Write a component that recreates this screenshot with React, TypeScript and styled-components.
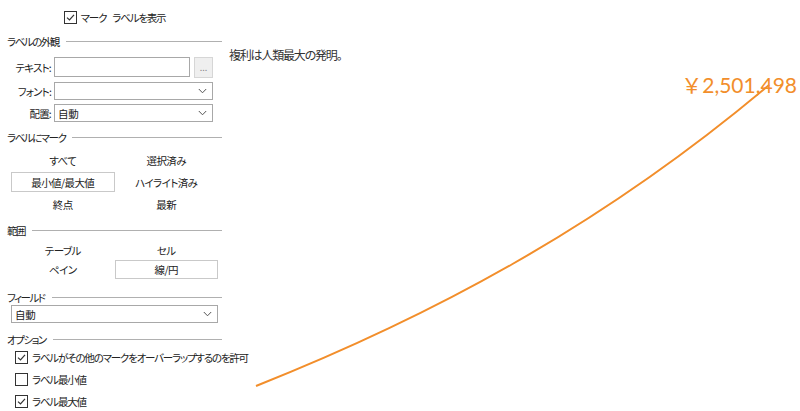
import React from 'react'
import styled, { createGlobalStyle } from 'styled-components'

const GlobalStyle = createGlobalStyle`
  html, body {
    margin: 0;
    padding: 0;
    background: #ffffff;
  }
  body {
    font-family: 'Noto Sans CJK JP', 'Noto Sans', sans-serif;
    font-feature-settings: 'palt';
    color: #222222;
  }
`

const Colors = {
  text: '#222222',
  line: '#b0b0b0',
  border: '#c9c9c9',
  fieldBorder: '#a8a8a8',
  orange: '#f28e2b',
}

const Page = styled.div`
  display: flex;
  width: 800px;
  height: 411px;
  overflow: hidden;
`

const Panel = styled.div`
  width: 215px;
  padding-left: 7px;
  display: flex;
  flex-direction: column;
  font-size: 10.5px;
  letter-spacing: -1.2px;
  color: ${Colors.text};
`

const CenterRow = styled.label`
  margin-top: 8px;
  height: 18px;
  display: flex;
  align-items: center;
  justify-content: center;
  gap: 4px;
  word-spacing: 5px;
`

const Box = styled.span`
  width: 11px;
  height: 11px;
  border: 1px solid #333333;
  background: #ffffff;
  display: flex;
  align-items: center;
  justify-content: center;
  flex-shrink: 0;
`

const Section = styled.div<{ $top: number; $h?: number }>`
  margin-top: ${(p) => p.$top}px;
  height: ${(p) => p.$h ?? 18}px;
  display: flex;
  align-items: center;
  gap: 7px;
  letter-spacing: -1.5px;

  &::after {
    content: '';
    flex: 1;
    height: 1px;
    background: ${Colors.line};
  }
`

const FormGrid = styled.div`
  margin-top: 7px;
  display: grid;
  grid-template-columns: 44px 159px;
  column-gap: 3px;
  row-gap: 4px;
  align-items: center;
`

const FieldLabel = styled.span`
  text-align: right;
  white-space: nowrap;
  letter-spacing: -0.8px;
`

const InputRow = styled.div`
  display: flex;
  gap: 4px;
`

const TextInput = styled.div`
  flex: 1;
  height: 18px;
  border: 1px solid ${Colors.fieldBorder};
  background: #ffffff;
`

const MoreButton = styled.div`
  width: 17px;
  height: 19px;
  border: 1px solid #d6d6d6;
  background: #efefef;
  color: #888888;
  font-size: 9px;
  letter-spacing: 0;
  display: flex;
  align-items: center;
  justify-content: center;
`

const Select = styled.div<{ $indent?: number; $width?: number }>`
  box-sizing: border-box;
  margin-left: ${(p) => p.$indent ?? 0}px;
  width: ${(p) => (p.$width ? `${p.$width}px` : 'auto')};
  height: 18px;
  border: 1px solid ${Colors.fieldBorder};
  background: #ffffff;
  display: flex;
  align-items: center;
  justify-content: space-between;
  padding: 0 5px 0 3px;
  letter-spacing: -0.3px;
`

const Choices = styled.div<{ $top: number; $row: number; $gap: number }>`
  margin-top: ${(p) => p.$top}px;
  margin-left: 4px;
  width: 207px;
  display: grid;
  grid-template-columns: 1fr 1fr;
  grid-auto-rows: ${(p) => p.$row}px;
  row-gap: ${(p) => p.$gap}px;
  letter-spacing: -0.6px;
`

const Choice = styled.div<{ $active?: boolean }>`
  display: flex;
  align-items: center;
  justify-content: center;
  box-sizing: border-box;
  border: 1px solid ${(p) => (p.$active ? Colors.border : 'transparent')};
  background: #ffffff;
`

const Options = styled.div`
  margin-left: 8px;
  display: flex;
  flex-direction: column;
  gap: 2px;
`

const OptionRow = styled.label`
  height: 20px;
  display: flex;
  align-items: center;
  gap: 4px;
  white-space: nowrap;
`

const Canvas = styled.div`
  position: relative;
  flex: 1;
  padding: 0 0 0 7px;
`

const Title = styled.div`
  margin-top: 45px;
  font-size: 12px;
  letter-spacing: -1.2px;
  line-height: 20px;
  color: #333333;
`

const CurveLayer = styled.svg`
  position: absolute;
  left: 0;
  top: 0;
  pointer-events: none;
`

const ValueLabel = styled.span`
  position: absolute;
  right: 3px;
  top: 71px;
  font-family: 'Lato', 'Noto Sans CJK JP', sans-serif;
  font-feature-settings: normal;
  font-size: 21px;
  line-height: 28px;
  color: ${Colors.orange};
`

const Check = ({ checked }: { checked: boolean }) => (
  <Box>
    {checked && (
      <svg width="9" height="9" viewBox="0 0 9 9">
        <path d="M1 4.6 L3.5 7 L8 1.8" fill="none" stroke="#333" strokeWidth="1.2" />
      </svg>
    )}
  </Box>
)

const Chevron = () => (
  <svg width="9" height="6" viewBox="0 0 9 6">
    <path d="M0.8 1 L4.5 4.8 L8.2 1" fill="none" stroke="#555" strokeWidth="1" />
  </svg>
)

const markOptions = [
  { label: 'すべて' },
  { label: '選択済み' },
  { label: '最小値/最大値', active: true },
  { label: 'ハイライト済み' },
  { label: '終点' },
  { label: '最新' },
]

const scopeOptions = [
  { label: 'テーブル' },
  { label: 'セル' },
  { label: 'ペイン' },
  { label: '線/円', active: true },
]

const options = [
  { label: 'ラベルがその他のマークをオーバーラップするのを許可', checked: true },
  { label: 'ラベル最小値', checked: false },
  { label: 'ラベル最大値', checked: true },
]

export default function App() {
  return (
    <Page>
      <GlobalStyle />
      <Panel>
        <CenterRow>
          <Check checked />
          <span>マーク ラベルを表示</span>
        </CenterRow>

        <Section $top={6}>ラベルの外観</Section>
        <FormGrid>
          <FieldLabel>テキスト:</FieldLabel>
          <InputRow>
            <TextInput />
            <MoreButton>...</MoreButton>
          </InputRow>
          <FieldLabel>フォント:</FieldLabel>
          <Select>
            <span />
            <Chevron />
          </Select>
          <FieldLabel>配置:</FieldLabel>
          <Select>
            <span>自動</span>
            <Chevron />
          </Select>
        </FormGrid>

        <Section $top={6}>ラベルにマーク</Section>
        <Choices $top={4} $row={20} $gap={2}>
          {markOptions.map((o) => (
            <Choice key={o.label} $active={o.active}>
              {o.label}
            </Choice>
          ))}
        </Choices>

        <Section $top={7}>範囲</Section>
        <Choices $top={2} $row={19} $gap={0}>
          {scopeOptions.map((o) => (
            <Choice key={o.label} $active={o.active}>
              {o.label}
            </Choice>
          ))}
        </Choices>

        <Section $top={10} $h={16}>フィールド</Section>
        <Select $indent={4} $width={207}>
          <span>自動</span>
          <Chevron />
        </Select>

        <Section $top={8} $h={16}>オプション</Section>
        <Options>
          {options.map((o) => (
            <OptionRow key={o.label}>
              <Check checked={o.checked} />
              <span>{o.label}</span>
            </OptionRow>
          ))}
        </Options>
      </Panel>

      <Canvas>
        <Title>複利は人類最大の発明。</Title>
        <CurveLayer width="578" height="411" viewBox="0 0 578 411">
          <path
            d="M34 386 C205 318 376 229 547 85"
            fill="none"
            stroke={Colors.orange}
            strokeWidth="2"
          />
        </CurveLayer>
        <ValueLabel>￥2,501,498</ValueLabel>
      </Canvas>
    </Page>
  )
}
